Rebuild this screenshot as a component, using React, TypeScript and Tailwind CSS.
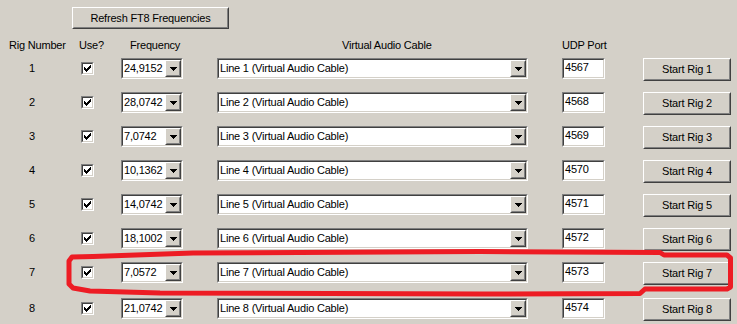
import React from "react";

const rigs = [
  { freq: "24,9152", port: "4567" },
  { freq: "28,0742", port: "4568" },
  { freq: "7,0742", port: "4569" },
  { freq: "10,1362", port: "4570" },
  { freq: "14,0742", port: "4571" },
  { freq: "18,1002", port: "4572" },
  { freq: "7,0572", port: "4573" },
  { freq: "21,0742", port: "4574" },
];

const Raised = ({ className, children }: { className: string; children?: React.ReactNode }) => (
  <div
    className={`flex border border-t-white border-l-white border-r-[#404040] border-b-[#404040] ${className}`}
  >
    <div className="flex-1 flex items-center justify-center border border-t-[#d4d0c8] border-l-[#d4d0c8] border-r-[#808080] border-b-[#808080]">
      {children}
    </div>
  </div>
);

const Sunken = ({ className, children }: { className: string; children?: React.ReactNode }) => (
  <div
    className={`flex border border-t-[#808080] border-l-[#808080] border-r-white border-b-white ${className}`}
  >
    <div className="flex-1 flex bg-white border border-t-[#404040] border-l-[#404040] border-r-[#d4d0c8] border-b-[#d4d0c8] overflow-hidden">
      {children}
    </div>
  </div>
);

const Arrow = () => (
  <svg width="7" height="4" viewBox="0 0 7 4" shapeRendering="crispEdges">
    <rect x="0" y="0" width="7" height="1" fill="#000" />
    <rect x="1" y="1" width="5" height="1" fill="#000" />
    <rect x="2" y="2" width="3" height="1" fill="#000" />
    <rect x="3" y="3" width="1" height="1" fill="#000" />
  </svg>
);

const Combo = ({ className, value }: { className: string; value: string }) => (
  <Sunken className={className}>
    <div className="flex-1 pl-[1px] leading-[17px] whitespace-nowrap overflow-hidden">{value}</div>
    <Raised className="w-[16px] h-[17px] bg-[#d4d0c8]">
      <Arrow />
    </Raised>
  </Sunken>
);

const CheckBox = () => (
  <Sunken className="w-[13px] h-[13px] mt-[4px] ml-[17px]">
    <svg width="9" height="9" viewBox="0 0 9 9" shapeRendering="crispEdges">
      <rect x="1" y="3" width="1" height="3" fill="#000" />
      <rect x="2" y="4" width="1" height="3" fill="#000" />
      <rect x="3" y="5" width="1" height="3" fill="#000" />
      <rect x="4" y="4" width="1" height="3" fill="#000" />
      <rect x="5" y="3" width="1" height="3" fill="#000" />
      <rect x="6" y="2" width="1" height="3" fill="#000" />
      <rect x="7" y="1" width="1" height="3" fill="#000" />
    </svg>
  </Sunken>
);

export default function App() {
  return (
    <div className="relative w-[737px] h-[324px] overflow-hidden bg-[#d4d0c8] text-[11px] tracking-[-0.2px] text-black font-['Liberation_Sans',Arial,sans-serif]">
      <div className="pt-[7px] pl-[72px]">
        <Raised className="w-[157px] h-[22px]">Refresh FT8 Frequencies</Raised>
      </div>

      <div className="mt-[10px] flex h-[13px] leading-[13px] pl-[9px] whitespace-nowrap">
        <span className="w-[70px]">Rig Number</span>
        <span className="w-[51px]">Use?</span>
        <span className="w-[212px]">Frequency</span>
        <span className="w-[220px]">Virtual Audio Cable</span>
        <span>UDP Port</span>
      </div>

      <div className="mt-[6px] flex flex-col">
        {rigs.map((rig, i) => (
          <div key={i} className={`flex items-start h-[34px] ${i === 7 ? "mt-[2px]" : ""}`}>
            <div className="w-[64px] text-center leading-[21px]">{i + 1}</div>
            <CheckBox />
            <Combo className="ml-[27px] w-[62px] h-[21px]" value={rig.freq} />
            <Combo
              className="ml-[34px] w-[311px] h-[21px]"
              value={`Line ${i + 1} (Virtual Audio Cable)`}
            />
            <Sunken className="ml-[34px] w-[43px] h-[21px]">
              <div className="pl-[1px] leading-[14px]">{rig.port}</div>
            </Sunken>
            <Raised className="ml-[38px] w-[88px] h-[23px]">Start Rig {i + 1}</Raised>
          </div>
        ))}
      </div>

      <svg
        className="absolute inset-0 pointer-events-none"
        width="737"
        height="324"
        viewBox="0 0 737 324"
      >
        <path
          d="M72 257 L93 256.5 L193 253 L480 251.5 L660 252.5 L664 255 L727 255 L730.5 258 L730.5 287 L727 289 L645 289 L640 293.5 L480 294 L160 293 L90 291 L73 288 L69 284 L69 261 Z"
          fill="none"
          stroke="#ed1c24"
          strokeWidth="5"
          strokeLinejoin="round"
        />
      </svg>
    </div>
  );
}
